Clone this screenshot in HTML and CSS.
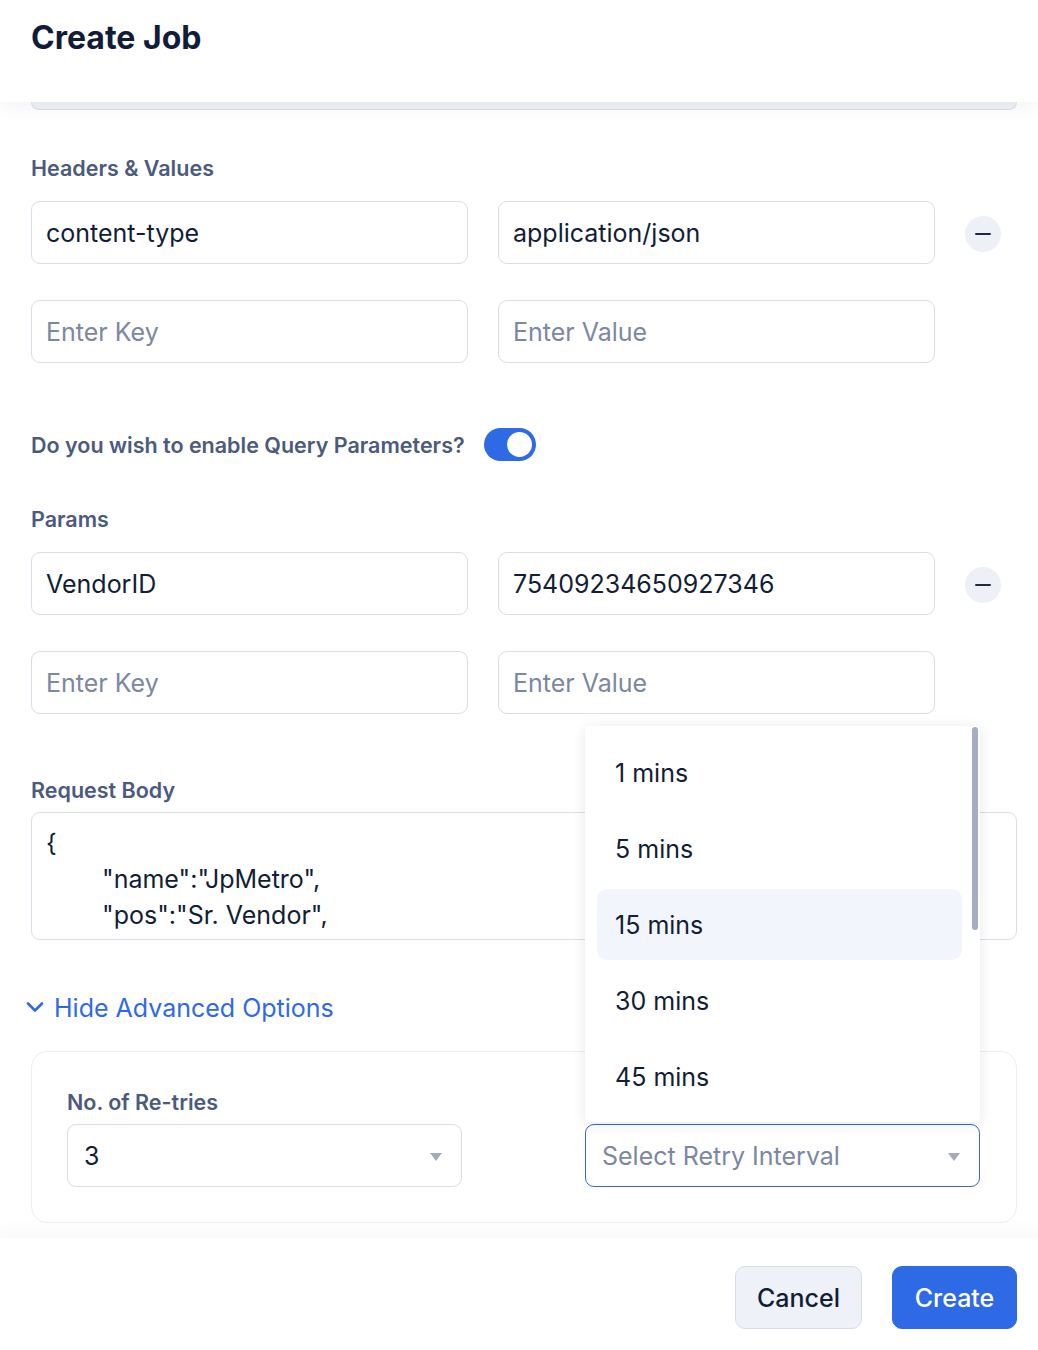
FILE: index.html
```html
<!DOCTYPE html>
<html lang="en">
<head>
<meta charset="utf-8">
<title>Create Job</title>
<link rel="stylesheet" href="styles.css">
</head>
<body>
<div class="modal">
  <header class="modal-header">
    <h1 class="title">Create Job</h1>
  </header>

  <main class="modal-body">
    <div class="stub"></div>

    <div class="label label-first">Headers &amp; Values</div>
    <div class="kv-row">
      <input class="field" type="text" value="content-type">
      <input class="field" type="text" value="application/json">
      <button class="minus" type="button" aria-label="Remove"><span></span></button>
    </div>
    <div class="kv-row kv-row-next">
      <input class="field" type="text" placeholder="Enter Key">
      <input class="field" type="text" placeholder="Enter Value">
    </div>

    <div class="toggle-row">
      <span class="label">Do you wish to enable Query Parameters?</span>
      <span class="toggle"><span class="knob"></span></span>
    </div>

    <div class="label label-params">Params</div>
    <div class="kv-row">
      <input class="field" type="text" value="VendorID">
      <input class="field" type="text" value="75409234650927346">
      <button class="minus" type="button" aria-label="Remove"><span></span></button>
    </div>
    <div class="kv-row kv-row-next">
      <input class="field" type="text" placeholder="Enter Key">
      <input class="field" type="text" placeholder="Enter Value">
    </div>

    <div class="label label-body">Request Body</div>
    <div class="code-box">
      <div class="code-line">{</div>
      <div class="code-line indent">"name":"JpMetro",</div>
      <div class="code-line indent">"pos":"Sr. Vendor",</div>
    </div>

    <div class="adv-link">
      <svg class="chev" width="18" height="12" viewBox="0 0 18 12"><polyline points="2,2.5 9,9.5 16,2.5" fill="none" stroke="#2f6ae6" stroke-width="2.6" stroke-linecap="round" stroke-linejoin="round"/></svg>
      <span>Hide Advanced Options</span>
    </div>

    <div class="adv-card">
      <div class="adv-field">
        <div class="label">No. of Re-tries</div>
        <div class="select">
          <span class="select-value">3</span>
          <span class="caret"></span>
        </div>
      </div>
      <div class="adv-field adv-field-menu">
        <div class="select select-focus">
          <span class="select-placeholder">Select Retry Interval</span>
          <span class="caret"></span>
        </div>
        <div class="menu">
          <div class="menu-item">1 mins</div>
          <div class="menu-item">5 mins</div>
          <div class="menu-item active">15 mins</div>
          <div class="menu-item">30 mins</div>
          <div class="menu-item">45 mins</div>
          <div class="scrollbar"></div>
        </div>
      </div>
    </div>
  </main>

  <footer class="modal-footer">
    <button class="btn btn-cancel" type="button">Cancel</button>
    <button class="btn btn-create" type="button">Create</button>
  </footer>
</div>
</body>
</html>
```

FILE: styles.css
```css
* { box-sizing: border-box; }

html, body {
  margin: 0;
  padding: 0;
  background: #ffffff;
}

body {
  font-family: Inter, "Noto Sans", "Liberation Sans", sans-serif;
  color: #121d36;
}

.modal {
  width: 1038px;
  height: 1350px;
  display: flex;
  flex-direction: column;
  background: #ffffff;
  overflow: hidden;
}

.modal-header {
  height: 102px;
  flex: 0 0 102px;
  padding: 18px 31px 0;
  background: #ffffff;
  position: relative;
  z-index: 3;
  box-shadow: 0 6px 18px rgba(30, 50, 90, 0.05);
}

.title {
  margin: 0;
  font-size: 32px;
  line-height: 40px;
  font-weight: 700;
  color: #111c39;
}

.modal-body {
  flex: 0 0 1136px;
  height: 1136px;
  overflow: hidden;
  padding: 0 21px 0 31px;
  position: relative;
  z-index: 1;
  background: #ffffff;
}

.stub {
  height: 8px;
  border: 1px solid #d9dee8;
  border-top: none;
  border-radius: 0 0 12px 12px;
  background: #eef1f4;
}

.label {
  font-size: 21.5px;
  line-height: 24px;
  font-weight: 600;
  color: #4b5a7d;
}

.label-first { margin-top: 46px; margin-bottom: 21px; }
.label-params { margin-top: 46px; margin-bottom: 21px; }
.label-body { margin-top: 64px; margin-bottom: 10px; }

.kv-row {
  display: grid;
  grid-template-columns: 437px 437px 36px;
  column-gap: 30px;
  align-items: center;
}

.kv-row-next { margin-top: 36px; }

.field {
  display: block;
  width: 100%;
  height: 63px;
  margin: 0;
  padding: 0 14px;
  border: 1px solid #d8dde7;
  border-radius: 9px;
  background: #ffffff;
  font-family: inherit;
  font-size: 25px;
  color: #121d36;
  outline: none;
}

.field::placeholder { color: #7c87a2; opacity: 1; }

.minus {
  width: 36px;
  height: 36px;
  padding: 0;
  margin-top: 2px;
  border: none;
  border-radius: 50%;
  background: #edf0f7;
  display: flex;
  align-items: center;
  justify-content: center;
  cursor: pointer;
}

.minus span {
  display: block;
  width: 16px;
  height: 2px;
  border-radius: 1px;
  background: #1f2a44;
}

.toggle-row {
  margin-top: 65px;
  height: 33px;
  display: flex;
  align-items: center;
  gap: 19px;
}

.toggle {
  width: 52px;
  height: 33px;
  border-radius: 17px;
  background: #2f6ae6;
  display: flex;
  align-items: center;
  justify-content: flex-end;
  padding: 0 4px;
}

.knob {
  width: 25px;
  height: 25px;
  border-radius: 50%;
  background: #ffffff;
}

.code-box {
  height: 128px;
  overflow: hidden;
  border: 1px solid #d8dde7;
  border-radius: 9px;
  padding: 12px 14px 0;
  font-size: 25px;
  line-height: 36px;
  color: #121d36;
}

.code-line { white-space: pre; }
.code-line.indent { padding-left: 56px; }

.adv-link {
  margin-top: 53px;
  margin-left: -5px;
  height: 30px;
  display: flex;
  align-items: center;
  gap: 10px;
  color: #2f6ae6;
  font-size: 25px;
  line-height: 30px;
}

.chev { display: block; margin-top: -2px; }

.adv-card {
  margin-top: 28px;
  border: 1px solid #eceef3;
  border-radius: 16px;
  padding: 38px 35px 35px;
  display: grid;
  grid-template-columns: 395px 395px;
  column-gap: 123px;
  align-items: end;
}

.adv-field .label { margin-bottom: 10px; }

.adv-field-menu { position: relative; }

.select {
  height: 63px;
  border: 1px solid #d8dde7;
  border-radius: 9px;
  display: flex;
  align-items: center;
  justify-content: space-between;
  padding: 0 19px 0 16px;
  font-size: 25px;
  background: #ffffff;
}

.select-focus { border-color: #3a66cf; }

.select-value { color: #121d36; }
.select-placeholder { color: #7c87a2; }

.caret {
  width: 0;
  height: 0;
  border-left: 6.5px solid transparent;
  border-right: 6.5px solid transparent;
  border-top: 8px solid #a2aabb;
  margin-top: 2px;
}

.menu {
  position: absolute;
  left: 0;
  bottom: 65px;
  width: 395px;
  height: 396px;
  overflow: hidden;
  background: #ffffff;
  border-radius: 4px;
  box-shadow: 0 2px 14px rgba(20, 30, 60, 0.10);
  padding: 11px 18px 0 12px;
  display: flex;
  flex-direction: column;
  gap: 5px;
  z-index: 10;
}

.menu-item {
  flex: 0 0 71px;
  height: 71px;
  border-radius: 10px;
  padding-left: 18px;
  display: flex;
  align-items: center;
  font-size: 25px;
  color: #121d36;
}

.menu-item.active { background: #f3f5fc; }

.scrollbar {
  position: absolute;
  top: 1px;
  right: 2px;
  width: 6px;
  height: 203px;
  border-radius: 3px;
  background: #a3aec6;
}

.modal-footer {
  flex: 0 0 112px;
  height: 112px;
  padding: 28px 21px 0;
  display: flex;
  justify-content: flex-end;
  align-items: flex-start;
  gap: 30px;
  background: #ffffff;
  position: relative;
  z-index: 3;
  box-shadow: 0 -6px 16px rgba(30, 50, 90, 0.04);
}

.btn {
  height: 63px;
  border-radius: 10px;
  font-family: inherit;
  font-size: 25px;
  font-weight: 500;
  cursor: pointer;
  padding: 0;
}

.btn-cancel {
  width: 127px;
  background: #eef1f8;
  border: 1px solid #d7dce7;
  color: #121d36;
}

.btn-create {
  width: 125px;
  background: #2f6ae6;
  border: 1px solid #2f6ae6;
  color: #ffffff;
}
```
